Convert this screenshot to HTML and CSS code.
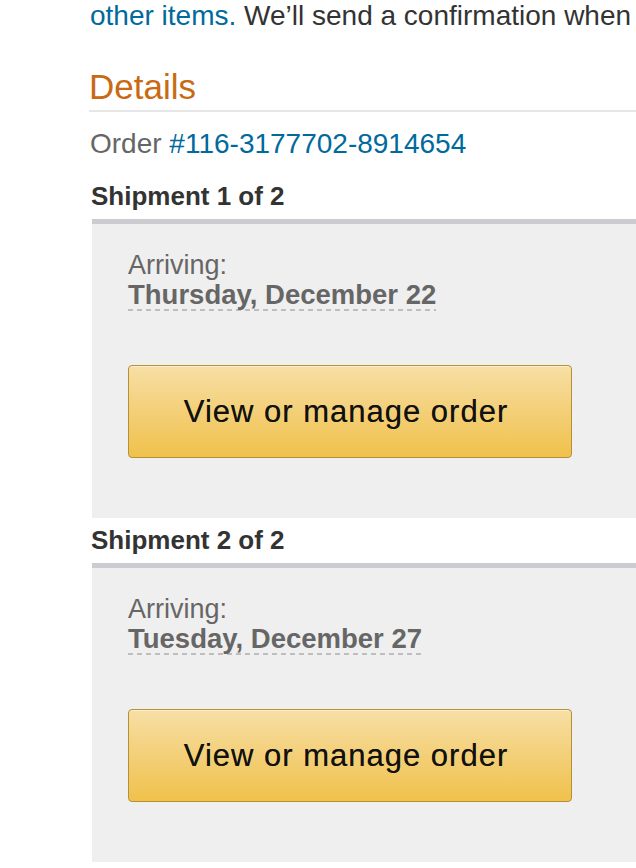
FILE: index.html
```html
<!DOCTYPE html>
<html lang="en">
<head>
<meta charset="utf-8">
<title>Order details</title>
<link rel="stylesheet" href="styles.css">
</head>
<body>
<div class="page">
  <p class="intro"><a class="link" href="#">other items.</a> We’ll send a confirmation when</p>

  <h2 class="details-title">Details</h2>

  <p class="order-line">Order <a class="link" href="#">#116-3177702-8914654</a></p>

  <section class="shipment">
    <h3 class="shipment-title">Shipment 1 of 2</h3>
    <div class="shipment-panel">
      <div class="arriving">Arriving:</div>
      <div class="arrival-date"><span class="date-text">Thursday, December 22</span></div>
      <a class="order-button" href="#">View or manage order</a>
    </div>
  </section>

  <section class="shipment">
    <h3 class="shipment-title">Shipment 2 of 2</h3>
    <div class="shipment-panel">
      <div class="arriving">Arriving:</div>
      <div class="arrival-date"><span class="date-text">Tuesday, December 27</span></div>
      <a class="order-button" href="#">View or manage order</a>
    </div>
  </section>
</div>
</body>
</html>
```

FILE: styles.css
```css
html, body {
  margin: 0;
  padding: 0;
  background: #ffffff;
  overflow: hidden;
}

body {
  font-family: "Liberation Sans", Arial, Helvetica, sans-serif;
  color: #333333;
}

.page {
  box-sizing: border-box;
  width: 100%;
  padding-left: 90px;
}

.link {
  color: #006a9c;
  text-decoration: none;
}

.intro {
  margin: 0;
  font-size: 28px;
  line-height: 32px;
  white-space: nowrap;
  color: #333333;
}

.details-title {
  margin: 35px 0 0 -1px;
  padding-bottom: 3px;
  font-size: 35px;
  line-height: 40px;
  font-weight: normal;
  color: #c96a12;
  border-bottom: 2px solid #e6e6e6;
}

.order-line {
  margin: 16px 0 0 0;
  font-size: 28px;
  line-height: 32px;
  color: #666666;
}

.shipment {
  margin-left: 2px;
}

.shipment:first-of-type {
  margin-top: 14px;
}

.shipment-title {
  margin: 0 0 0 -1px;
  padding: 7px 0 8px 0;
  font-size: 26px;
  line-height: 30px;
  font-weight: bold;
  color: #333333;
}

.shipment-panel {
  background: #efefef;
  border-top: 5px solid #cbccd2;
  padding: 26px 0 60px 36px;
}

.arriving {
  font-size: 27px;
  line-height: 30px;
  color: #666666;
}

.arrival-date {
  font-size: 27.5px;
  line-height: 30px;
  font-weight: bold;
  color: #666666;
}

.date-text {
  padding-bottom: 1px;
  background-image: repeating-linear-gradient(to right, #bdbdbd 0 5px, transparent 5px 9px);
  background-repeat: no-repeat;
  background-position: left bottom;
  background-size: 100% 2px;
}

.order-button {
  display: flex;
  align-items: center;
  justify-content: center;
  box-sizing: border-box;
  width: 444px;
  height: 93px;
  margin-top: 55px;
  padding-right: 8px;
  border: 1px solid #b49036;
  border-radius: 4px;
  background: linear-gradient(to bottom, #f7dfa5 0%, #f3cf78 50%, #f0c14b 100%);
  box-shadow: inset 0 1px 0 rgba(255, 255, 255, 0.45);
  color: #111111;
  font-size: 31px;
  letter-spacing: 1px;
  text-decoration: none;
  text-shadow: 0 0 0.6px rgba(0, 0, 0, 0.6);
}
```
